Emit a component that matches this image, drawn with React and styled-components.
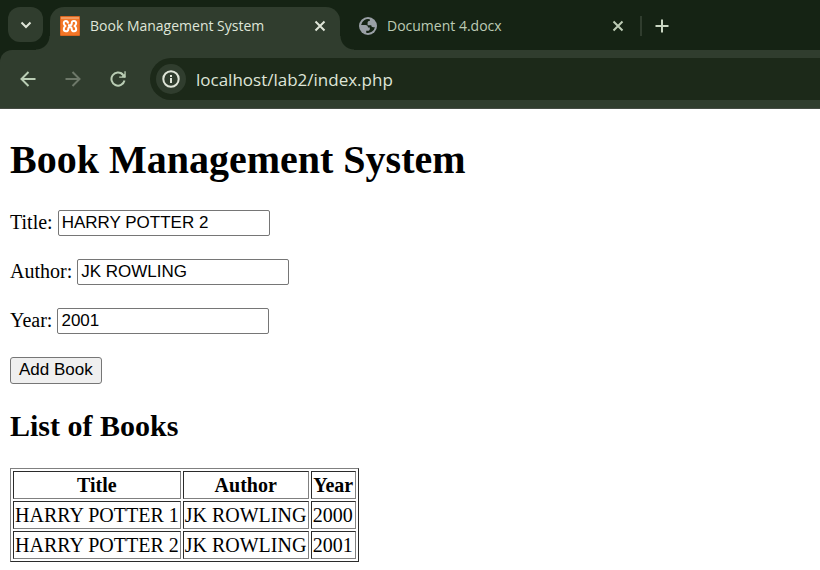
import React from "react";
import styled, { createGlobalStyle } from "styled-components";

const colors = {
  strip: "#152314",
  surface: "#303d2e",
  field: "#1c2919",
  tabText: "#dfe5d8",
  muted: "#bccbb5",
};

const GlobalStyle = createGlobalStyle`
  body {
    margin: 0;
    background: #fff;
    color: #000;
    font: 20px "Liberation Serif", "Times New Roman", serif;
  }
  * { box-sizing: border-box; }
`;

const Browser = styled.header`
  background: ${colors.strip};
  color: ${colors.tabText};
  font-family: "Open Sans", "Noto Sans", sans-serif;
`;

const TabStrip = styled.div`
  display: flex;
  align-items: flex-end;
  height: 50px;
`;

const IconButton = styled.button`
  display: grid;
  place-items: center;
  flex: none;
  width: ${(p) => p.$size}px;
  height: ${(p) => p.$size}px;
  padding: 0;
  border: 0;
  border-radius: ${(p) => p.$radius || 0}px;
  background: ${(p) => (p.$filled ? colors.surface : "transparent")};
  color: ${(p) => p.$color || colors.tabText};
  svg { display: block; }
`;

const TabSearch = styled.div`
  padding: 0 7px 8px 8px;
`;

const Tab = styled.div`
  position: relative;
  display: flex;
  align-items: center;
  flex: none;
  width: ${(p) => (p.$active ? 290 : 300)}px;
  height: 43px;
  padding: 0 10px 6px ${(p) => (p.$active ? 10 : 19)}px;
  border-radius: 14px 14px 0 0;
  color: ${(p) => (p.$active ? colors.tabText : colors.muted)};
  background: ${(p) => (p.$active ? colors.surface : "transparent")};
  ${(p) =>
    p.$active &&
    `
    &::before, &::after {
      content: "";
      position: absolute;
      bottom: 0;
      width: 14px;
      height: 14px;
    }
    &::before {
      right: 100%;
      background: radial-gradient(circle at 0 0, transparent 13px, ${colors.surface} 14px);
    }
    &::after {
      left: 100%;
      background: radial-gradient(circle at 100% 0, transparent 13px, ${colors.surface} 14px);
    }
  `}
`;

const TabTitle = styled.span`
  flex: 1;
  padding-left: 10px;
  font-size: 14px;
  line-height: 20px;
  white-space: nowrap;
`;

const NewTab = styled.div`
  display: flex;
  align-items: center;
  height: 43px;
  padding-bottom: 6px;
  gap: 10px;
  &::before {
    content: "";
    width: 2px;
    height: 20px;
    background: ${colors.surface};
  }
`;

const Toolbar = styled.nav`
  display: flex;
  align-items: center;
  height: 59px;
  padding-left: 15px;
  gap: 20px;
  border-bottom: 1px solid #454b43;
  border-radius: 12px 0 0 0;
  background: ${colors.surface};
`;

const AddressBar = styled.div`
  display: flex;
  align-items: center;
  flex: 1;
  height: 42px;
  padding-left: 6px;
  gap: 10px;
  border-radius: 21px 0 0 21px;
  background: ${colors.field};
`;

const Address = styled.input`
  flex: 1;
  min-width: 0;
  padding: 0;
  border: 0;
  outline: 0;
  background: transparent;
  color: ${colors.tabText};
  font: 17px "Open Sans", "Noto Sans", sans-serif;
`;

const Page = styled.main`
  padding: 28px 10px 8px;
`;

const PageTitle = styled.h1`
  margin: 0 0 27px;
  font-size: 40px;
  line-height: 46px;
`;

const SectionTitle = styled.h2`
  margin: 25px 0;
  font-size: 30px;
  line-height: 34px;
`;

const BookForm = styled.form`
  display: flex;
  flex-direction: column;
  align-items: flex-start;
  gap: 23px;
`;

const Field = styled.div`
  display: flex;
  align-items: center;
  gap: 5px;
  line-height: 24px;
`;

const FieldLabel = styled.label`
  padding-bottom: 2px;
`;

const TextInput = styled.input`
  width: 212px;
  height: 26px;
  padding: 0 3px 1px;
  border: 1px solid #767676;
  border-radius: 2px;
  background: #fff;
  color: #000;
  font: 17px "Liberation Sans", Arial, sans-serif;
`;

const SubmitButton = styled.button`
  height: 27px;
  padding: 0 8px 1px;
  border: 1px solid #767676;
  border-radius: 3px;
  background: #efefef;
  color: #000;
  font: 17px "Liberation Sans", Arial, sans-serif;
`;

const BookTable = styled.table`
  border: 1px solid;
  border-color: #808080 #2b2b2b #2b2b2b #808080;
  border-spacing: 2px;
  line-height: 24px;
  white-space: nowrap;
  th, td {
    padding: 1px;
    border: 1px solid;
    border-color: #2b2b2b #808080 #808080 #2b2b2b;
  }
  th:nth-child(2) { min-width: 126px; }
  th:nth-child(3) { min-width: 45px; }
`;

const Stroke = ({ size, width = 2, children }) => (
  <svg width={size} height={size} viewBox={`0 0 ${size} ${size}`} fill="none" stroke="currentColor" strokeWidth={width} aria-hidden="true">
    {children}
  </svg>
);

const ChevronIcon = () => <Stroke size={12}><path d="M1.500 3.500 6 8l4.500-4.500" /></Stroke>;
const CloseIcon = () => <Stroke size={12}><path d="m1.500 1.500 9 9m0-9-9 9" /></Stroke>;
const PlusIcon = () => <Stroke size={14}><path d="M7 .5v13M.5 7h13" /></Stroke>;
const BackIcon = () => <Stroke size={16}><path d="M15.500 8H2M8.500 1 1.500 8l7 7" /></Stroke>;
const ForwardIcon = () => <Stroke size={16}><path d="M.5 8H14M7.500 1l7 7-7 7" /></Stroke>;
const ReloadIcon = () => (
  <Stroke size={16}>
    <path d="M14.500 9.500A6.600 6.600 0 1 1 12.800 3.400" />
    <path d="M15.700.3v6.500H9.200v-1.300h2.600l2.600-2.600V.3z" fill="currentColor" stroke="none" />
    <path d="M11 2l4 4" />
  </Stroke>
);
const InfoIcon = () => (
  <Stroke size={18}>
    <circle cx="9" cy="9" r="7.700" />
    <path d="M9 8v5M9 5v2" />
  </Stroke>
);

const XamppIcon = () => (
  <svg width="20" height="20" viewBox="0 0 20 20" aria-hidden="true">
    <rect width="20" height="20" rx="1" fill="#d9651f" />
    <rect x="1" y="1" width="18" height="18" fill="#f37626" />
    <path d="M1 1h18v2H1z" fill="#f09a60" />
    <path
      d="M8 7.500C8 4.300 3.800 4.300 3.800 7.200c0 1.400.8 2 1.700 2.800-1 .8-1.700 1.500-1.700 3 0 3 4.400 3 4.400.5 0-1.500.5-2.500 1.800-2.500s1.800 1 1.800 2.500c0 2.500 4.400 2.500 4.400-.5 0-1.500-.7-2.200-1.700-3 1-.8 1.700-1.400 1.700-2.800 0-3-4.400-3-4.400-.5 0 1.700-.5 2.600-1.800 2.600H8"
      fill="none"
      stroke="#fff"
      strokeWidth="2"
      strokeLinejoin="round"
    />
  </svg>
);

const GlobeIcon = () => (
  <svg width="18" height="18" viewBox="0 0 18 18" aria-hidden="true">
    <circle cx="9" cy="9" r="9" fill="#9aa0a6" />
    <path
      d="M10.800 2.300A7 7 0 0 0 2.100 8h4.400c1.500 0 2.500 1 2.500 2.400h1.800V12c0 1-.8 1.800-1.800 1.800H7.200v1.900a7 7 0 0 0 8.700-5.500h-1.700a2 2 0 0 1-2-2H8.600V5.600c0-1 .8-1.700 1.700-1.700h.5z"
      fill="#152314"
    />
  </svg>
);

const books = [
  ["HARRY POTTER 1", "JK ROWLING", "2000"],
  ["HARRY POTTER 2", "JK ROWLING", "2001"],
];

const fields = [
  ["title", "Title:", "HARRY POTTER 2"],
  ["author", "Author:", "JK ROWLING"],
  ["year", "Year:", "2001"],
];

export default function App() {
  return (
    <>
      <GlobalStyle />
      <Browser>
        <TabStrip>
          <TabSearch>
            <IconButton $size={35} $radius={12} $filled aria-label="Search tabs"><ChevronIcon /></IconButton>
          </TabSearch>
          <Tab $active>
            <XamppIcon />
            <TabTitle>Book Management System</TabTitle>
            <IconButton $size={20} aria-label="Close Book Management System"><CloseIcon /></IconButton>
          </Tab>
          <Tab>
            <GlobeIcon />
            <TabTitle>Document 4.docx</TabTitle>
            <IconButton $size={24} $color={colors.muted} aria-label="Close Document 4.docx"><CloseIcon /></IconButton>
          </Tab>
          <NewTab>
            <IconButton $size={20} $color="#c9d6c2" aria-label="New tab"><PlusIcon /></IconButton>
          </NewTab>
        </TabStrip>
        <Toolbar aria-label="Browser toolbar">
          <IconButton $size={25} $color="#b9cdb4" aria-label="Back"><BackIcon /></IconButton>
          <IconButton $size={25} $color="#6d7869" aria-label="Forward"><ForwardIcon /></IconButton>
          <IconButton $size={25} $color="#b9cdb4" aria-label="Reload"><ReloadIcon /></IconButton>
          <AddressBar>
            <IconButton $size={30} $radius={15} $filled aria-label="Site information"><InfoIcon /></IconButton>
            <Address aria-label="Address" defaultValue="localhost/lab2/index.php" />
          </AddressBar>
        </Toolbar>
      </Browser>
      <Page>
        <PageTitle>Book Management System</PageTitle>
        <BookForm onSubmit={(e) => e.preventDefault()}>
          {fields.map(([id, label, value]) => (
            <Field key={id}>
              <FieldLabel htmlFor={id}>{label}</FieldLabel>
              <TextInput id={id} name={id} defaultValue={value} />
            </Field>
          ))}
          <SubmitButton type="submit">Add Book</SubmitButton>
        </BookForm>
        <SectionTitle>List of Books</SectionTitle>
        <BookTable>
          <thead>
            <tr><th>Title</th><th>Author</th><th>Year</th></tr>
          </thead>
          <tbody>
            {books.map((book) => (
              <tr key={book[0]}>{book.map((cell) => <td key={cell}>{cell}</td>)}</tr>
            ))}
          </tbody>
        </BookTable>
      </Page>
    </>
  );
}
